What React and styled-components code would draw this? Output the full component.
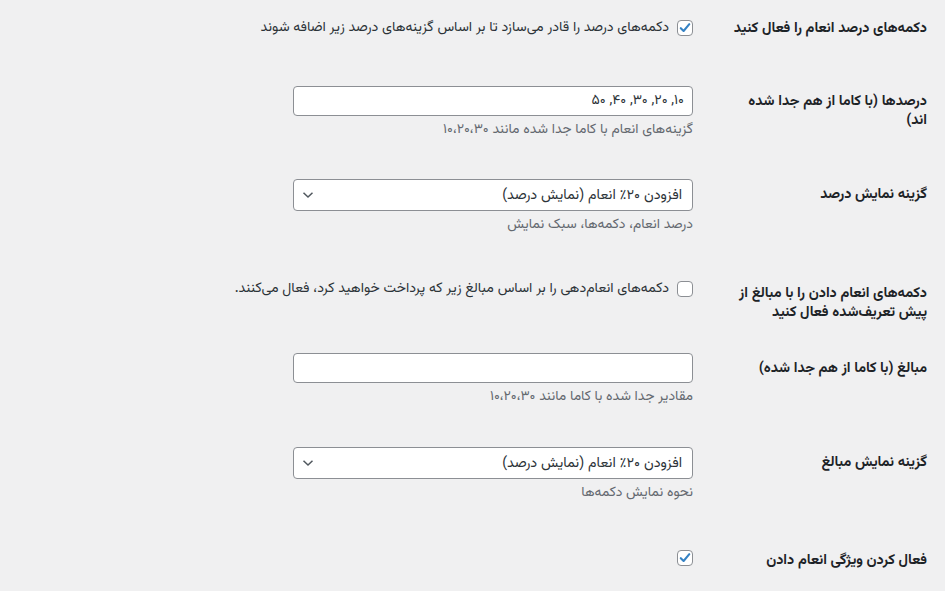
import React from "react";
import styled, { createGlobalStyle } from "styled-components";

const Global = createGlobalStyle`
  html, body { margin: 0; padding: 0; background: #f0f0f1; }
  body {
    font-family: "Vazirmatn", "Noto Sans Arabic", "DejaVu Sans", sans-serif;
    color: #1d2327;
    font-size: 14px;
  }
`;

const Page = styled.div`
  direction: rtl;
  padding: 0 18px 0 0;
  width: 945px;
  height: 591px;
  box-sizing: border-box;
  overflow: hidden;
`;

const Row = styled.div`
  display: flex;
  align-items: flex-start;
  min-height: ${(p) => p.$h}px;
`;

const Th = styled.div`
  width: 200px;
  padding: ${(p) => (p.$top ? p.$top : 22)}px 0 0 24px;
  flex: none;
  font-weight: 700;
  font-size: 14.4px;
  line-height: 18.5px;
  color: #1d2327;
`;

const Td = styled.div`
  padding: 15px 10px;
  width: 400px;
  flex: none;
`;

const CheckLine = styled.label`
  display: flex;
  align-items: center;
  gap: 8px;
  min-height: 26px;
  font-size: 14.1px;
  color: #2c3338;
  white-space: nowrap;
`;

const Box = styled.span`
  width: 14px;
  height: 14px;
  flex: none;
  border: 1px solid #8c8f94;
  border-radius: 4px;
  background: #fff;
  box-sizing: content-box;
  display: flex;
  align-items: center;
  justify-content: center;
`;

const TextInput = styled.div`
  height: 28px;
  border: 1px solid #8c8f94;
  border-radius: 4px;
  background: #fff;
  display: flex;
  align-items: center;
  padding: 0 8px;
  font-size: 14px;
  color: #2c3338;
`;

const Select = styled.div`
  height: 30px;
  border: 1px solid #8c8f94;
  border-radius: 4px;
  background: #fff;
  display: flex;
  align-items: center;
  justify-content: space-between;
  padding: 0 10px 0 8px;
  font-size: 14.3px;
  color: #2c3338;
`;

const Desc = styled.p`
  margin: 5px 0 0;
  font-size: 13.9px;
  line-height: 18px;
  color: #646970;
`;

const Check = ({ checked }) => (
  <Box>
    {checked && (
      <svg width="14" height="14" viewBox="0 0 14 14">
        <path d="M2.8 7.2 L5.6 10 L11.3 3.2" fill="none" stroke="#3582c4" strokeWidth="2.1" strokeLinecap="round" strokeLinejoin="round" />
      </svg>
    )}
  </Box>
);

const Chevron = () => (
  <svg width="12" height="8" viewBox="0 0 12 8">
    <path d="M1.5 1.8 L6 6 L10.5 1.8" fill="none" stroke="#50575e" strokeWidth="1.5" />
  </svg>
);

export default function App() {
  return (
    <>
      <Global />
      <Page>
        <Row $h={71}>
          <Th $top={20}>دکمه‌های درصد انعام را فعال کنید</Th>
          <Td>
            <CheckLine>
              <Check checked />
              دکمه‌های درصد را قادر می‌سازد تا بر اساس گزینه‌های درصد زیر اضافه شوند
            </CheckLine>
          </Td>
        </Row>
        <Row $h={93}>
          <Th>درصدها (با کاما از هم جدا شده اند)</Th>
          <Td>
            <TextInput>۱۰, ۲۰, ۳۰, ۴۰, ۵۰</TextInput>
            <Desc>گزینه‌های انعام با کاما جدا شده مانند ۱۰،۲۰،۳۰</Desc>
          </Td>
        </Row>
        <Row $h={97}>
          <Th>گزینه نمایش درصد</Th>
          <Td>
            <Select>
              <span>افزودن ۲۰٪ انعام (نمایش درصد)</span>
              <Chevron />
            </Select>
            <Desc>درصد انعام، دکمه‌ها، سبک نمایش</Desc>
          </Td>
        </Row>
        <Row $h={77}>
          <Th $top={24}>دکمه‌های انعام دادن را با مبالغ از پیش تعریف‌شده فعال کنید</Th>
          <Td>
            <CheckLine>
              <Check />
              دکمه‌های انعام‌دهی را بر اساس مبالغ زیر که پرداخت خواهید کرد، فعال می‌کنند.
            </CheckLine>
          </Td>
        </Row>
        <Row $h={94}>
          <Th>مبالغ (با کاما از هم جدا شده)</Th>
          <Td>
            <TextInput />
            <Desc>مقادیر جدا شده با کاما مانند ۱۰،۲۰،۳۰</Desc>
          </Td>
        </Row>
        <Row $h={98}>
          <Th>گزینه نمایش مبالغ</Th>
          <Td>
            <Select>
              <span>افزودن ۲۰٪ انعام (نمایش درصد)</span>
              <Chevron />
            </Select>
            <Desc>نحوه نمایش دکمه‌ها</Desc>
          </Td>
        </Row>
        <Row $h={61}>
          <Th>فعال کردن ویژگی انعام دادن</Th>
          <Td>
            <CheckLine>
              <Check checked />
            </CheckLine>
          </Td>
        </Row>
      </Page>
    </>
  );
}
